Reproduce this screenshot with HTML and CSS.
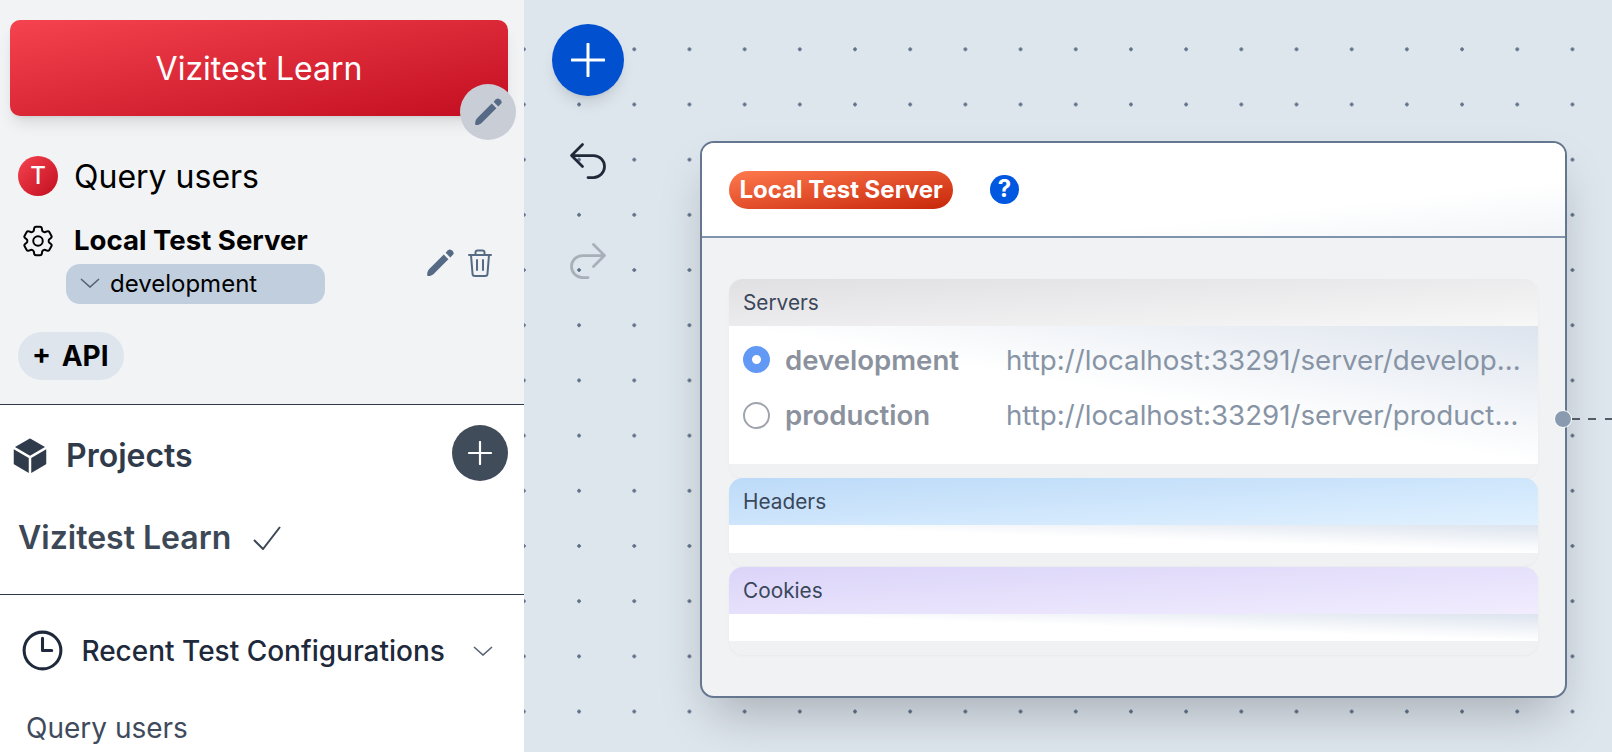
FILE: index.html
```html
<!DOCTYPE html>
<html lang="en">
<head>
    <meta charset="UTF-8">
    <title>Vizitest Learn</title>
    <link rel="stylesheet" href="styles.css">
</head>
<body>
<div class="app">
    <aside class="sidebar">
        <section class="current">
            <div class="project-banner">
                <button class="banner-btn">Vizitest Learn</button>
                <button class="banner-edit">
                    <svg class="pencil" viewBox="0 0 24 24"><path d="M1.2 23.2C.6 20.4 1.6 18.4 3.2 16.8L15.2 4.8 19.2 8.8 7.2 20.8C5.6 22.4 3.8 23.4 1.2 23.2Z"/><path d="M16.8 3.2 18.9 1.1A2.2 2.2 0 0 1 22 1.1L22.9 2A2.2 2.2 0 0 1 22.9 5.1L20.8 7.2Z"/></svg>
                </button>
            </div>
            <div class="test-row">
                <span class="avatar">T</span>
                <span class="test-name">Query users</span>
            </div>
            <div class="env-row">
                <svg class="gear" viewBox="0 0 24 24"><path d="M9.594 3.94c.09-.542.56-.94 1.11-.94h2.593c.55 0 1.02.398 1.11.94l.213 1.281c.063.374.313.686.645.87.074.04.147.083.22.127.325.196.72.257 1.075.124l1.217-.456a1.125 1.125 0 011.37.49l1.296 2.247a1.125 1.125 0 01-.26 1.431l-1.003.827c-.293.241-.438.613-.43.992a7.723 7.723 0 010 .255c-.008.378.137.75.43.991l1.004.827c.424.35.534.955.26 1.43l-1.298 2.247a1.125 1.125 0 01-1.369.491l-1.217-.456c-.355-.133-.75-.072-1.076.124a6.47 6.47 0 01-.22.128c-.331.183-.581.495-.644.869l-.213 1.28c-.09.543-.56.941-1.11.941h-2.594c-.55 0-1.02-.398-1.11-.94l-.213-1.281c-.062-.374-.312-.686-.644-.87a6.52 6.52 0 01-.22-.127c-.325-.196-.72-.257-1.076-.124l-1.217.456a1.125 1.125 0 01-1.369-.49l-1.297-2.247a1.125 1.125 0 01.26-1.431l1.004-.827c.292-.24.437-.613.43-.992a6.932 6.932 0 010-.255c.007-.378-.138-.75-.43-.99l-1.004-.828a1.125 1.125 0 01-.26-1.43l1.297-2.247a1.125 1.125 0 011.37-.491l1.216.456c.356.133.751.072 1.076-.124.072-.044.146-.087.22-.128.332-.183.582-.495.644-.869l.214-1.281z"/><path d="M15 12a3 3 0 11-6 0 3 3 0 016 0z"/></svg>
                <div class="env-info">
                    <div class="env-name">Local Test Server</div>
                    <div class="env-select">
                        <svg class="chevron" viewBox="0 0 20 10"><path d="M1 1l9 8 9-8"/></svg>
                        <span>development</span>
                    </div>
                </div>
                <div class="env-actions">
                    <svg class="pencil" viewBox="0 0 24 24"><path d="M1.2 23.2C.6 20.4 1.6 18.4 3.2 16.8L15.2 4.8 19.2 8.8 7.2 20.8C5.6 22.4 3.8 23.4 1.2 23.2Z"/><path d="M16.8 3.2 18.9 1.1A2.2 2.2 0 0 1 22 1.1L22.9 2A2.2 2.2 0 0 1 22.9 5.1L20.8 7.2Z"/></svg>
                    <svg class="trash" viewBox="0 0 24 28"><path d="M1 6h22M7.5 6V3.5A2 2 0 0 1 9.500 1.500h5a2 2 0 0 1 2 2V6M3 6l1.500 18.500A2.500 2.500 0 0 0 7 27h10a2.500 2.500 0 0 0 2.500-2.500L21 6M9 11v10M15 11v10"/></svg>
                </div>
            </div>
            <button class="api-btn">+ API</button>
        </section>
        <section class="projects">
            <div class="projects-head">
                <svg class="cube" viewBox="0 0 24 24"><path d="M12.378 1.602a.75.75 0 00-.756 0L3 6.632l9 5.25 9-5.25-8.622-5.03zM21.75 7.93l-9 5.25v9l8.628-5.032a.75.75 0 00.372-.648V7.93zM11.25 22.18v-9l-9-5.25v8.57a.75.75 0 00.372.648l8.628 5.033z"/></svg>
                <h2>Projects</h2>
                <button class="round-add">
                    <svg viewBox="0 0 24 24"><path d="M12 1v22M1 12h22"/></svg>
                </button>
            </div>
            <div class="project-item">
                <span>Vizitest Learn</span>
                <svg class="check" viewBox="0 0 28 24"><path d="M1 14l9 9L27 1"/></svg>
            </div>
        </section>
        <section class="recent">
            <div class="recent-head">
                <svg class="clock" viewBox="0 0 24 24"><path d="M12 6v6h4.500m4.500 0a9 9 0 11-18 0 9 9 0 0118 0z"/></svg>
                <h3>Recent Test Configurations</h3>
                <svg class="chevron" viewBox="0 0 20 10"><path d="M1 1l9 8 9-8"/></svg>
            </div>
            <div class="recent-item">Query users</div>
        </section>
    </aside>

    <main class="canvas">
        <div class="tools">
            <button class="add-node">
                <svg viewBox="0 0 34 34"><path d="M17 1v32M1 17h32"/></svg>
            </button>
            <svg class="history" viewBox="0 0 24 24"><path d="M9 15L3 9m0 0l6-6M3 9h12a6 6 0 010 12h-3"/></svg>
            <svg class="history off" viewBox="0 0 24 24"><path d="M15 15l6-6m0 0l-6-6m6 6H9a6 6 0 000 12h3"/></svg>
        </div>

        <div class="node">
            <div class="node-head">
                <span class="node-title">Local Test Server</span>
                <span class="help">?</span>
            </div>
            <div class="node-body">
                <div class="panel">
                    <div class="panel-title grey">Servers</div>
                    <div class="panel-body">
                        <div class="server">
                            <span class="radio on"></span>
                            <span class="server-name">development</span>
                            <span class="server-url">http://localhost:33291/server/development</span>
                        </div>
                        <div class="server">
                            <span class="radio"></span>
                            <span class="server-name">production</span>
                            <span class="server-url">http://localhost:33291/server/production</span>
                        </div>
                    </div>
                </div>
                <div class="panel">
                    <div class="panel-title blue">Headers</div>
                    <div class="panel-body empty"></div>
                </div>
                <div class="panel">
                    <div class="panel-title purple">Cookies</div>
                    <div class="panel-body empty"></div>
                </div>
            </div>
            <span class="handle"></span>
        </div>
        <div class="edge"></div>
    </main>
</div>
</body>
</html>
```

FILE: styles.css
```css
*{
    margin:0;
    padding:0;
    box-sizing:border-box;
}
html,body{
    height:100%;
    overflow:hidden;
}
body{
    font-family:Inter,"Liberation Sans",sans-serif;
    color:#000;
    background:#fff;
}
button{
    border:0;
    font-family:inherit;
    cursor:pointer;
}
svg{
    display:block;
    flex:none;
}
.app{
    display:flex;
    height:752px;
}

/* left column */
.sidebar{
    width:524px;
    flex:none;
    overflow:hidden;
    background:#fff;
}
.current{
    height:405px;
    padding:20px 16px 0 10px;
    background:#f1f3f5;
    border-bottom:1px solid #2e3a4b;
}
.project-banner{
    position:relative;
    margin-bottom:40px;
}
.banner-btn{
    display:block;
    width:100%;
    height:96px;
    border-radius:10px;
    background:linear-gradient(to bottom right,#f5434f,#c20e20);
    box-shadow:0 10px 15px -3px rgba(0,0,0,.1),0 4px 6px -4px rgba(0,0,0,.1);
    color:#fff;
    font-size:32px;
}
.banner-edit{
    position:absolute;
    right:-8px;
    bottom:-24px;
    width:56px;
    height:56px;
    border-radius:50%;
    background:#c9ced6;
    display:flex;
    align-items:center;
    justify-content:center;
}
.pencil{
    width:28px;
    height:28px;
    fill:#566a85;
}
.test-row{
    display:flex;
    align-items:center;
    padding-left:8px;
    gap:16px;
    margin-bottom:27px;
}
.avatar{
    width:40px;
    height:40px;
    border-radius:50%;
    background:linear-gradient(to bottom right,#f5434f,#c20e20);
    color:#fff;
    font-size:24px;
    font-weight:500;
    line-height:40px;
    text-align:center;
}
.test-name{
    font-size:32px;
}
.env-row{
    display:flex;
    padding-left:8px;
    margin-bottom:28px;
}
.gear{
    width:38px;
    height:38px;
    margin:-1px 14.6px 0 1.4px;
    fill:none;
    stroke:#000;
    stroke-width:1.250;
    stroke-linejoin:round;
}
.env-info{
    width:260px;
}
.env-name{
    margin:0 0 7px 2px;
    font-size:27.6px;
    font-weight:700;
    line-height:34px;
}
.env-select{
    display:flex;
    align-items:center;
    gap:10px;
    width:259px;
    height:40px;
    margin-left:-6px;
    padding:0 0 2px 14px;
    border-radius:14px;
    background:#c1cedd;
    font-size:24px;
}
.chevron{
    width:20px;
    height:10px;
    fill:none;
    stroke:#566374;
    stroke-width:1.600;
}
.env-actions{
    display:flex;
    gap:14px;
    margin:26px 0 0 94px;
}
.trash{
    width:24px;
    height:28px;
    fill:none;
    stroke:#566a85;
    stroke-width:2;
    stroke-linejoin:round;
    stroke-linecap:round;
}
.api-btn{
    display:block;
    width:106px;
    height:48px;
    margin-left:8px;
    padding-left:14px;
    border-radius:24px;
    background:#dee5ed;
    font-size:28px;
    font-weight:700;
    word-spacing:4px;
    text-align:left;
    color:#000;
}

.projects{
    height:190px;
    padding:20px 16px 0 14px;
    border-bottom:1px solid #2e3a4b;
}
.projects-head{
    display:flex;
    align-items:center;
    height:56px;
}
.cube{
    width:40px;
    height:40px;
    margin:5px 0 0 -4px;
    fill:#2f3a4b;
}
.projects-head h2{
    flex:1;
    margin:4px 0 0 16px;
    font-size:32px;
    font-weight:600;
    color:#2f3a4b;
}
.round-add{
    width:56px;
    height:56px;
    border-radius:50%;
    background:#414c5a;
    display:flex;
    align-items:center;
    justify-content:center;
}
.round-add svg{
    width:24px;
    height:24px;
    fill:none;
    stroke:#fff;
    stroke-width:2.200;
    stroke-linecap:round;
}
.project-item{
    display:flex;
    align-items:center;
    gap:22px;
    margin:37px 0 0 4px;
    font-size:32px;
    font-weight:600;
    color:#3d4857;
}
.check{
    width:28px;
    height:24px;
    fill:none;
    stroke:#3d4857;
    stroke-width:2;
}

.recent{
    padding:26px 0 0 16px;
}
.recent-head{
    display:flex;
    align-items:center;
    height:60px;
}
.clock{
    width:49px;
    height:49px;
    margin:-2px 0 0 2.4px;
    fill:none;
    stroke:#1e293b;
    stroke-width:1.500;
    stroke-linecap:round;
    stroke-linejoin:round;
}
.recent-head h3{
    margin:0 28px 0 14px;
    font-size:28px;
    font-weight:500;
    color:#1e293b;
}
.recent-item{
    margin:30px 0 0 10px;
    font-size:28px;
    color:#3f4b5c;
}

/* diagram */
.canvas{
    flex:1;
    position:relative;
    overflow:hidden;
    background-color:#dde5ed;
    background-image:radial-gradient(circle,#5f7089 1.500px,transparent 2px);
    background-size:55.2px 55.2px;
    background-position:27.47px 21.7px;
}
.tools{
    display:flex;
    flex-direction:column;
    align-items:center;
    width:72px;
    margin:24px 0 0 28px;
    position:relative;
    z-index:2;
}
.add-node{
    width:72px;
    height:72px;
    border-radius:50%;
    background:#0050d0;
    box-shadow:0 10px 15px -3px rgba(0,0,0,.1),0 4px 6px -4px rgba(0,0,0,.1);
    display:flex;
    align-items:center;
    justify-content:center;
    margin-bottom:43px;
}
.add-node svg{
    width:34px;
    height:34px;
    fill:none;
    stroke:#fff;
    stroke-width:3;
    stroke-linecap:round;
}
.history{
    width:44px;
    height:44px;
    margin-bottom:56px;
    fill:none;
    stroke:#1f2937;
    stroke-width:1.500;
    stroke-linecap:round;
    stroke-linejoin:round;
}
.history.off{
    stroke:#a9afb9;
}
.node{
    position:absolute;
    left:176px;
    top:141px;
    width:866.5px;
    height:557px;
    border:2px solid #64778f;
    border-radius:14px;
    background:#f1f2f4;
    box-shadow:0 25px 50px -12px rgba(0,0,0,.25);
}
.node-head{
    display:flex;
    align-items:center;
    height:95px;
    padding:0 27px;
    border-bottom:2px solid #8093ac;
    border-radius:12px 12px 0 0;
    background:linear-gradient(to bottom right,#fff 70%,#f3f5f8);
}
.node-title{
    height:38px;
    padding:0 10.5px;
    border-radius:19px;
    background:linear-gradient(to bottom right,#ff7a4d,#c7260a);
    color:#fff;
    font-size:24px;
    font-weight:700;
    line-height:37px;
}
.help{
    width:28.5px;
    height:28.5px;
    margin-left:37px;
    border-radius:50%;
    background:#0058e0;
    color:#fff;
    font-size:24px;
    font-weight:700;
    line-height:28.5px;
    text-align:center;
}
.node-body{
    display:flex;
    flex-direction:column;
    gap:.5px;
    padding:41px 27px 0;
}
.panel{
    padding-bottom:13.5px;
    border-radius:14px;
    background:#eff1f3;
    box-shadow:0 1px 3px rgba(0,0,0,.04);
    overflow:hidden;
}
.panel-title{
    height:47px;
    padding-left:14px;
    font-size:20.8px;
    line-height:47px;
    color:#3a475a;
}
.panel-title.grey{
    background:linear-gradient(to bottom right,#e0e0e3,#f7f7f7);
}
.panel-title.blue{
    background:linear-gradient(to bottom right,#bcdaf8,#e0f1ff);
}
.panel-title.purple{
    background:linear-gradient(to bottom right,#dbd4f9,#f1edfe);
}
.panel-body{
    height:138px;
    padding-top:6px;
    background:linear-gradient(to top right,#fff 50%,#dde4ee);
}
.panel-body.empty{
    height:27.5px;
    padding:0;
}
.server{
    display:flex;
    align-items:center;
    height:55.5px;
    padding:0 14px;
}
.radio{
    width:27px;
    height:27px;
    flex:none;
    margin-right:15px;
    border:2px solid #a0a4ad;
    border-radius:50%;
    background:#fff;
}
.radio.on{
    border:9.5px solid #6199f5;
}
.server-name{
    width:221px;
    flex:none;
    font-size:27.6px;
    font-weight:600;
    color:#8b929e;
}
.server-url{
    min-width:0;
    flex:1;
    overflow:hidden;
    white-space:nowrap;
    text-overflow:ellipsis;
    font-size:27.7px;
    color:#8794a5;
}
.handle{
    position:absolute;
    right:-7px;
    top:267px;
    width:18px;
    height:18px;
    border:1.500px solid #fff;
    border-radius:50%;
    background:#8a9bb0;
}
.edge{
    position:absolute;
    left:1048px;
    top:418px;
    width:41px;
    height:2px;
    background:repeating-linear-gradient(to right,#555b66 0,#555b66 8px,transparent 8px,transparent 16.500px);
}
```
